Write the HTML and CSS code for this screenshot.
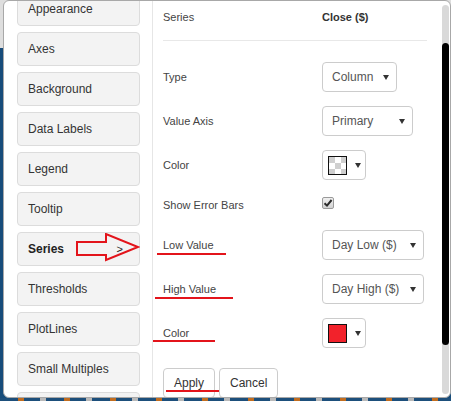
FILE: index.html
```html
<!DOCTYPE html>
<html>
<head>
<meta charset="utf-8">
<link rel="stylesheet" href="styles.css">
</head>
<body>
<div class="dialog">
  <nav class="sidebar">
    <div class="tabs">
      <div class="tab">Appearance</div>
      <div class="tab">Axes</div>
      <div class="tab">Background</div>
      <div class="tab">Data Labels</div>
      <div class="tab">Legend</div>
      <div class="tab">Tooltip</div>
      <div class="tab tab-active"><span>Series</span><span class="chev">&gt;</span>
        <svg class="pointer" width="64" height="30" viewBox="0 0 64 30"><polygon points="1,9 30,9 30,1 62,14 30,27 30,22 1,22" fill="none" stroke="#e3141b" stroke-width="2" stroke-linejoin="miter"/></svg>
      </div>
      <div class="tab">Thresholds</div>
      <div class="tab">PlotLines</div>
      <div class="tab">Small Multiples</div>
      <div class="tab"></div>
    </div>
  </nav>
  <section class="content">
    <div class="head"><span class="label">Series</span><span class="value">Close ($)</span></div>
    <div class="divider"></div>
    <div class="rows">
      <div class="row"><span class="label">Type</span><div class="select w75"><span>Column</span><i class="caret"></i></div></div>
      <div class="row"><span class="label">Value Axis</span><div class="select w91"><span>Primary</span><i class="caret"></i></div></div>
      <div class="row"><span class="label">Color</span><div class="picker"><span class="swatch checker"></span><i class="caret"></i></div></div>
      <div class="row row-check"><span class="label">Show Error Bars</span><span class="check"><svg width="10" height="10" viewBox="0 0 10 10"><path d="M1.5 5.2 L4 7.6 L8.6 2" fill="none" stroke="#2b2b2b" stroke-width="2"/></svg></span></div>
      <div class="row"><span class="label"><span class="marked mark-low">Low Value</span></span><div class="select w102"><span>Day Low ($)</span><i class="caret"></i></div></div>
      <div class="row"><span class="label"><span class="marked mark-high">High Value</span></span><div class="select w102"><span>Day High ($)</span><i class="caret"></i></div></div>
      <div class="row"><span class="label"><span class="marked mark-color">Color</span></span><div class="picker"><span class="swatch red"></span><i class="caret"></i></div></div>
      <div class="actions"><button class="btn btn-apply">Apply</button><button class="btn">Cancel</button></div>
    </div>
  </section>
  <div class="scroll"><div class="thumb"></div></div>
</div>
</body>
</html>
```
FILE: styles.css
```css
html, body {
  margin: 0;
  padding: 0;
}
body {
  width: 451px;
  height: 401px;
  overflow: hidden;
  font-family: "Liberation Sans", Arial, sans-serif;
  background:
    repeating-linear-gradient(90deg, #1d4f7b 0 18px, #c26d1f 18px 24px, #1d4f7b 24px 40px, #b9b9b9 40px 46px) 0 398px / 100% 3px no-repeat,
    linear-gradient(#dedede 0 48px, #174c7a 48px);
}
.dialog {
  margin-left: 3px;
  width: 448px;
  height: 398px;
  box-sizing: border-box;
  border: 1px solid #a8a8a8;
  border-radius: 6px;
  background: #fff;
  display: flex;
  overflow: hidden;
}
.sidebar {
  width: 149px;
  flex: none;
  box-sizing: border-box;
  border-right: 1px solid #e6e6e6;
  padding-left: 13px;
  overflow: hidden;
}
.tabs {
  display: flex;
  flex-direction: column;
  gap: 6px;
  margin-top: -9px;
}
.tab {
  position: relative;
  flex: none;
  width: 123px;
  height: 34px;
  box-sizing: border-box;
  border: 1px solid #dcdcdc;
  border-radius: 4px;
  background: #f3f3f3;
  padding: 0 16px 0 10px;
  display: flex;
  align-items: center;
  justify-content: space-between;
  font-size: 12px;
  color: #333;
}
.tab-active {
  font-weight: bold;
  color: #222;
}
.chev {
  font-weight: normal;
  font-size: 11px;
}
.pointer {
  position: absolute;
  left: 58px;
  top: 0;
}
.content {
  flex: 1;
  min-width: 0;
  padding: 0 15px 0 10px;
}
.head {
  height: 32px;
  display: flex;
  align-items: center;
  margin-bottom: 7px;
}
.value {
  font-size: 11px;
  font-weight: bold;
  color: #333;
}
.divider {
  height: 1px;
  background: #e8e8e8;
}
.rows {
  margin-top: 21px;
  display: flex;
  flex-direction: column;
  gap: 14px;
}
.row {
  display: flex;
  align-items: center;
  height: 30px;
}
.row-check {
  height: 22px;
}
.label {
  width: 159px;
  flex: none;
  font-size: 11px;
  color: #444;
  line-height: 13px;
}
.marked {
  position: relative;
  display: inline-block;
}
.marked::after {
  content: "";
  position: absolute;
  height: 2px;
  background: #e3141b;
}
.mark-low::after {
  left: -6px;
  width: 69px;
  bottom: -3px;
}
.mark-high::after {
  left: -8px;
  width: 78px;
  bottom: -3px;
}
.mark-color::after {
  left: -10px;
  width: 62px;
  bottom: -2px;
}
.select {
  height: 30px;
  box-sizing: border-box;
  border: 1px solid #ccc;
  border-radius: 4px;
  display: flex;
  align-items: center;
  justify-content: space-between;
  padding: 0 7px 0 9px;
  font-size: 12px;
  color: #555;
}
.w75 { width: 75px; }
.w91 { width: 91px; }
.w102 { width: 102px; }
.caret {
  width: 0;
  height: 0;
  border-left: 3px solid transparent;
  border-right: 3px solid transparent;
  border-top: 5px solid #333;
}
.picker {
  width: 44px;
  height: 30px;
  box-sizing: border-box;
  border: 1px solid #ccc;
  border-radius: 4px;
  display: flex;
  align-items: center;
  padding-left: 5px;
  gap: 8px;
}
.swatch {
  width: 19px;
  height: 19px;
  box-sizing: border-box;
  border: 1px solid #111;
}
.checker {
  background: conic-gradient(#fff 25%, #cfcfcf 0 50%, #fff 0 75%, #cfcfcf 0) 0 0 / 12px 12px;
}
.red {
  background: #f2222b;
}
.check {
  align-self: flex-start;
  margin-top: 3px;
  width: 12px;
  height: 12px;
  box-sizing: border-box;
  border: 1px solid #9a9a9a;
  border-radius: 2px;
  background: linear-gradient(#f0f0f0, #d2d2d2);
  display: flex;
  align-items: center;
  justify-content: center;
}
.actions {
  display: flex;
  gap: 4px;
  margin-top: 6px;
}
.btn {
  height: 30px;
  box-sizing: border-box;
  border: 1px solid #ccc;
  border-radius: 4px;
  background: #fff;
  padding: 0 10px;
  font-family: "Liberation Sans", Arial, sans-serif;
  font-size: 12px;
  color: #333;
}
.btn-apply {
  position: relative;
  z-index: 1;
}
.btn-apply::after {
  content: "";
  position: absolute;
  left: 2px;
  top: 21px;
  width: 53px;
  height: 2px;
  background: #e3141b;
}
.scroll {
  flex: none;
  width: 7px;
  margin: 4px 1px 3px 0;
  background: #d9d9d9;
  border-radius: 4px;
}
.thumb {
  margin-top: 38px;
  height: 302px;
  background: #000;
  border-radius: 4px;
}
```
